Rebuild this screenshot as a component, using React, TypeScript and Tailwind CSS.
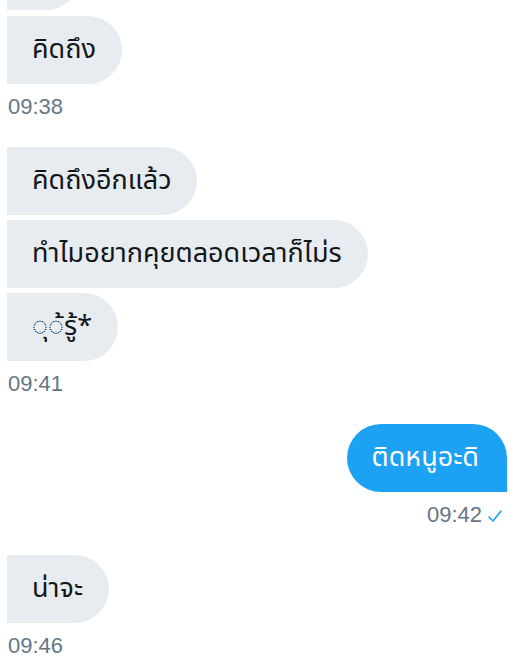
const thai = { fontFamily: '"Noto Sans Thai", "Noto Sans", "DejaVu Sans", sans-serif' };

function Left({ text }: { text: string }) {
  return (
    <div className="flex">
      <div
        className="ml-[7px] h-[68px] flex items-center pl-[25px] pr-[26px] bg-[#e6ecf0] rounded-r-[34px] text-[27px] text-[#14171a]"
        style={thai}
      >
        {text}
      </div>
    </div>
  );
}

function Time({ t, right }: { t: string; right?: boolean }) {
  return (
    <div
      className={
        "mt-[11px] mb-[28px] h-[24px] flex items-center text-[22px] leading-[24px] text-[#657786] font-['Liberation_Sans',sans-serif] " +
        (right ? "justify-end pr-[27px] gap-[6px]" : "pl-[8px]")
      }
    >
      <span>{t}</span>
      {right && (
        <svg width="14" height="12" viewBox="0 0 14 12" fill="none" className="mt-[1px]">
          <path d="M1 7 L5 11 L13 1" stroke="#1da1f2" strokeWidth="1.6" strokeLinecap="round" strokeLinejoin="round" />
        </svg>
      )}
    </div>
  );
}

export default function App() {
  return (
    <div className="w-[529px] h-[670px] overflow-hidden bg-white">
      <div className="flex flex-col mt-[-58px]">
        <div className="flex flex-col gap-[6px]">
          <div className="flex">
            <div className="ml-[7px] h-[68px] w-[73px] bg-[#e6ecf0] rounded-r-[34px]" />
          </div>
          <Left text="คิดถึง" />
        </div>
        <Time t="09:38" />
        <div className="flex flex-col gap-[5px]">
          <Left text="คิดถึงอีกแล้ว" />
          <Left text="ทำไมอยากคุยตลอดเวลาก็ไม่ร" />
          <Left text="◌ุ◌้รู้*" />
        </div>
        <Time t="09:41" />
        <div className="flex justify-end pr-[22px]">
          <div
            className="h-[68px] flex items-center pl-[25px] pr-[28px] bg-[#1da1f2] rounded-[34px] rounded-br-none text-[27px] text-white"
            style={thai}
          >
            ติดหนูอะดิ
          </div>
        </div>
        <Time t="09:42" right />
        <Left text="น่าจะ" />
        <Time t="09:46" />
      </div>
    </div>
  );
}
